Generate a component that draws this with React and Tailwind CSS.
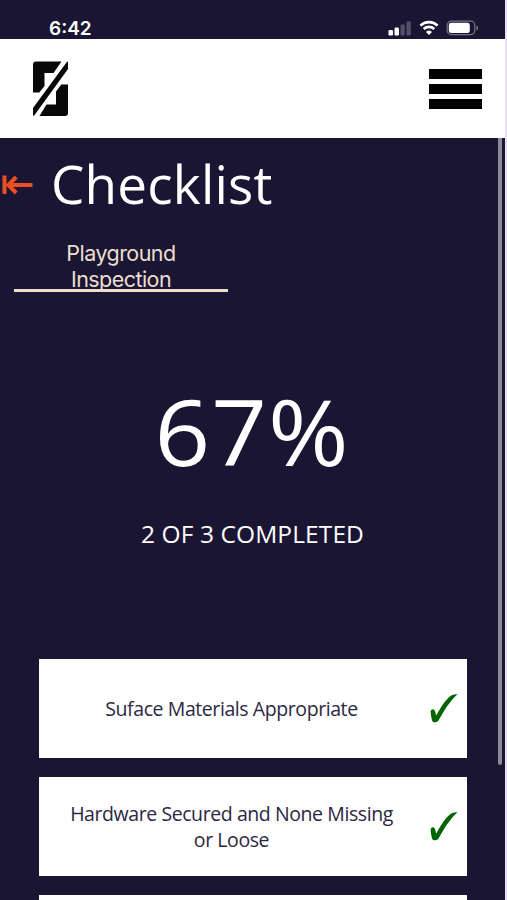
import React from 'react';

const items = [
  { id: 1, lines: ['Suface Materials Appropriate'], done: true },
  { id: 2, lines: ['Hardware Secured and None Missing', 'or Loose'], done: true },
  { id: 3, lines: [], done: false },
];

const StatusBar = () => (
  <div className="h-[39px] shrink-0 flex items-start justify-between pl-[49px] pr-[26px] pt-[18px] text-white">
    <span className="font-['Inter',sans-serif] text-[19px] leading-[21px] font-semibold">6:42</span>
    <div className="flex items-start gap-[7px] pt-[2px]">
      <svg width="24" height="16" viewBox="0 0 24 16" fill="#fff">
        <rect x="0.5" y="10" width="4.5" height="5.5" rx="1.2" />
        <rect x="6.5" y="7.5" width="4.5" height="8" rx="1.2" />
        <rect x="12.5" y="4.5" width="4.3" height="11" rx="1.2" opacity="0.25" />
        <rect x="18.5" y="1.5" width="4.3" height="14" rx="1.2" opacity="0.25" />
      </svg>
      <svg width="20" height="15" viewBox="0 0 20 15" fill="none" stroke="#fff" strokeWidth="2.6">
        <path d="M1.4 5.6a12.4 12.4 0 0 1 17.2 0" />
        <path d="M4.7 9a7.7 7.7 0 0 1 10.6 0" />
        <path d="M10 15l-3-3.1a4.3 4.3 0 0 1 6 0z" fill="#fff" stroke="none" />
      </svg>
      <svg width="33" height="16" viewBox="0 0 33 16">
        <rect x="1.2" y="1.2" width="27.6" height="13.4" rx="4" fill="none" stroke="#fff" strokeWidth="1.2" opacity="0.4" />
        <rect x="2.8" y="2.8" width="21" height="10.3" rx="2.4" fill="#fff" />
        <path d="M30.5 5.6v4.6c1-.4 1.6-1.2 1.6-2.3s-.6-1.9-1.6-2.3z" fill="#fff" opacity="0.45" />
      </svg>
    </div>
  </div>
);

const Header = () => (
  <header className="h-[99px] shrink-0 bg-white flex items-start justify-between pl-[33px] pr-[23px]">
    <svg className="mt-[22px]" width="35" height="56" viewBox="0 0 35 56" fill="#080808">
      <path d="M3 0.5H28.5L20.5 12H11.5V25L6.3 31.5H0V3.5A3 3 0 0 1 3 0.5z" />
      <path d="M35 0.8V8L1 54.8L0 54.5V47L34 0.8z" />
      <path d="M32 55H6.5L13.5 43.5H23V30.5L28.3 23.5H35V52A3 3 0 0 1 32 55z" />
    </svg>
    <button className="mt-[30px] flex flex-col gap-[5px]" aria-label="Menu">
      <span className="block w-[53px] h-[10px] bg-black" />
      <span className="block w-[53px] h-[10px] bg-black" />
      <span className="block w-[53px] h-[10px] bg-black" />
    </button>
  </header>
);

const Check = () => (
  <svg width="28" height="30" viewBox="0 0 28 30" fill="#006400">
    <path d="M0.7 17.4C0.8 15.5 3.4 14.6 4.6 16.2C5.6 17.6 5.4 19.8 6.3 21.6C11 12.5 16 5.2 21.2 1.5C22.8 0.4 25.5 0.3 27.5 0.2C19.5 7.5 14 16.5 8.7 26.3C7.6 28.6 3 29.2 2.2 26.8C1.4 24.2 0.6 20 0.7 17.4z" />
  </svg>
);

const App = () => {
  return (
    <div className="relative w-[507px] h-[900px] overflow-hidden flex flex-col bg-[#1b1534] border-r-2 border-[#e6e1f2] font-['Open_Sans',sans-serif]">
      <StatusBar />
      <Header />

      <main className="flex-1 min-h-0 flex flex-col">
        <div className="flex items-start h-[94px] shrink-0 pt-[16px]">
          <svg className="mt-[21px] ml-[2px] shrink-0" width="31" height="20" viewBox="0 0 31 20" fill="none" stroke="#ec4e24" strokeWidth="4">
            <path d="M2.5 0.5V19M5.5 10H30.5M14.2 2L6.4 10L14.2 18" />
          </svg>
          <h1 className="ml-[18px] text-[53px] leading-[60px] font-normal tracking-[0.2px] text-white whitespace-nowrap">Checklist</h1>
        </div>

        <div className="ml-[14px] w-[214px] h-[60px] shrink-0 border-b-[3px] border-[#eadfce] pt-[8px] text-center font-['Inter',sans-serif] text-[21.5px] leading-[26px] tracking-[-0.55px] text-[#eadfce]">
          <div>Playground</div>
          <div>Inspection</div>
        </div>

        <div className="h-[367px] shrink-0 pt-[84px] flex flex-col items-center text-white">
          <div className="text-[92px] leading-[110px] tracking-[1px] scale-x-[1.06] whitespace-nowrap">67%</div>
          <div className="mt-[32px] text-[24.5px] leading-[32px] tracking-[0.1px] whitespace-nowrap">2 OF 3 COMPLETED</div>
        </div>

        <ul className="ml-[39px] w-[428px] flex flex-col gap-[19.5px]">
          {items.map((item) => (
            <li key={item.id} className="h-[98.5px] shrink-0 bg-white flex items-center">
              <div className="w-[385px] pt-[2px] text-center text-[19.5px] leading-[26px] tracking-[-0.42px] text-[#2c2743] whitespace-nowrap">
                {item.lines.map((line) => (
                  <div key={line}>{line}</div>
                ))}
              </div>
              {item.done && <div className="ml-[6px] pt-[1px]"><Check /></div>}
            </li>
          ))}
        </ul>
      </main>

      <div className="absolute right-[3px] top-[138px] w-[4px] h-[627px] rounded-b-full bg-[#8d899b]" />
    </div>
  );
};

export default App;
